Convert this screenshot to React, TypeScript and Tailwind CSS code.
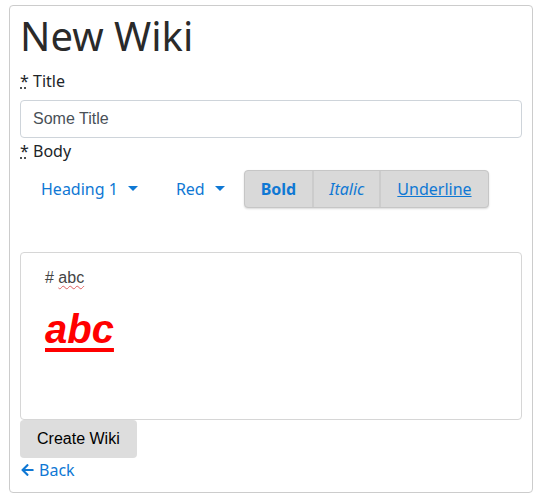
import React from "react";

function Caret() {
  return (
    <svg width="10" height="6" viewBox="0 0 10 6" className="ml-[10px]">
      <path d="M0 0 L10 0 L5 5 Z" fill="#0f78d4" />
    </svg>
  );
}

function ArrowLeft() {
  return (
    <svg width="13" height="14" viewBox="0 0 448 512" className="mr-[5px]">
      <path
        fill="#0f78d4"
        d="M257.5 445.1l-22.2 22.2c-9.4 9.4-24.6 9.4-33.9 0L7 273c-9.4-9.4-9.4-24.6 0-33.9L201.4 44.7c9.4-9.4 24.6-9.4 33.9 0l22.2 22.2c9.5 9.5 9.3 25-.4 34.3L136.6 216H424c13.3 0 24 10.7 24 24v32c0 13.3-10.7 24-24 24H136.6l120.5 114.8c9.8 9.3 10 24.8.4 34.3z"
      />
    </svg>
  );
}

export default function App() {
  const sans = { fontFamily: '"Noto Sans", "Open Sans", sans-serif' };
  const arial = { fontFamily: '"Liberation Sans", Arial, sans-serif' };
  return (
    <div className="w-[541px] h-[502px] bg-white pt-[5px] pl-[9px]" style={sans}>
      <div className="w-[524px] h-[488px] border border-[#cccccc] rounded-[4px] px-[10px] pt-[6px] text-[#212529]">
        <h1 className="text-[40px] leading-[48px] font-normal text-[#2a2a2a] m-0">New Wiki</h1>
        <label className="block text-[16px] leading-[24px] mt-[9px]">
          <abbr className="underline decoration-dotted" title="required">*</abbr> Title
        </label>
        <input
          className="block w-[502px] h-[38px] border border-[#ced4da] rounded-[4px] px-[12px] text-[16px] text-[#495057] mt-[7px] outline-none"
          style={arial}
          defaultValue="Some Title"
        />
        <label className="block text-[16px] leading-[24px] mt-[1px]">
          <abbr className="underline decoration-dotted" title="required">*</abbr> Body
        </label>
        <div className="flex items-center mt-[7px] h-[38px] text-[16px] text-[#0f78d4]">
          <div className="flex items-center pl-[21px] pr-[21px] h-full">
            Heading 1<Caret />
          </div>
          <div className="flex items-center pl-[17px] pr-[19px] h-full">
            Red<Caret />
          </div>
          <div className="flex h-[38px] bg-[#d9d9d9] border border-[#c6c6c6] rounded-[4px] shadow-[0_1px_2px_rgba(0,0,0,0.15)]">
            <div className="flex items-center px-[16px] font-bold border-r-2 border-[#cccccc]">Bold</div>
            <div className="flex items-center px-[15px] italic border-r-2 border-[#cccccc]">Italic</div>
            <div className="flex items-center px-[16px] underline">Underline</div>
          </div>
        </div>
        <div className="mt-[44px] w-[502px] h-[168px] border border-[#d6d6d6] rounded-[4px] pl-[24px] pt-[15px]" style={arial}>
          <p className="text-[16px] leading-[20px] text-[#444]">
            # <span className="underline decoration-wavy decoration-[#e06060] decoration-1 underline-offset-2">abc</span>
          </p>
          <p className="text-[40px] leading-[46px] mt-[18px] font-bold italic underline decoration-[4px] underline-offset-[5px] text-[#ff0000]">
            abc
          </p>
        </div>
        <button
          className="block h-[38px] px-[17px] bg-[#dddddd] rounded-[4px] text-[16px] text-black"
          style={arial}
        >
          Create Wiki
        </button>
        <a className="flex items-center text-[16px] leading-[24px] text-[#0f78d4] ml-[1px]">
          <ArrowLeft />
          Back
        </a>
      </div>
    </div>
  );
}
